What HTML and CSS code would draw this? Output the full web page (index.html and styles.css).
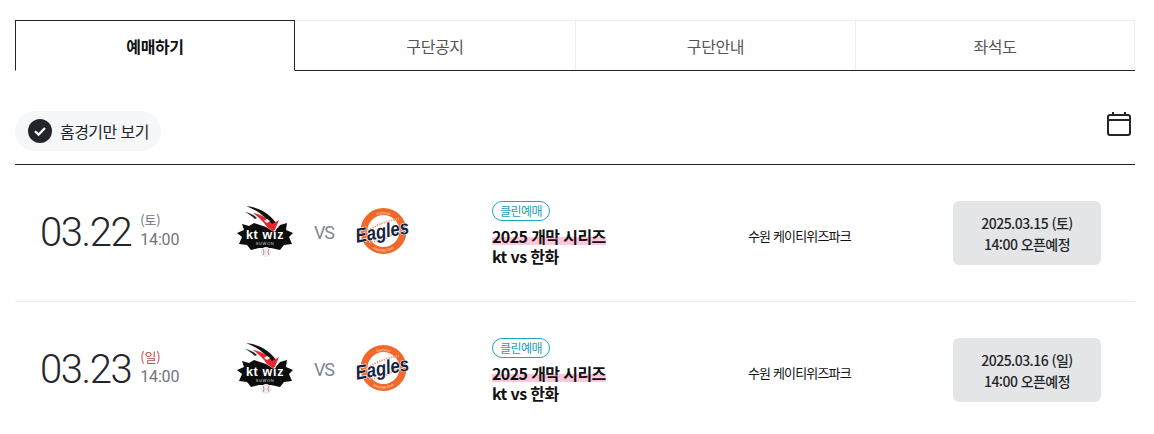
FILE: index.html
```html
<!DOCTYPE html>
<html lang="ko">
<head>
    <meta charset="utf-8">
    <meta name="viewport" content="width=device-width, initial-scale=1.0">
    <title>예매하기</title>
    <link rel="stylesheet" href="styles.css">
</head>
<body>
    <div class="container">
        <nav class="tabs">
            <a class="tab active" href="#">예매하기</a>
            <a class="tab" href="#">구단공지</a>
            <a class="tab" href="#">구단안내</a>
            <a class="tab" href="#">좌석도</a>
        </nav>

        <div class="filter-bar">
            <button class="home-filter">
                <svg class="check" viewBox="0 0 24 24" width="24" height="24">
                    <circle cx="12" cy="12" r="12" fill="#24252b"/>
                    <path d="M7 12.2L10.6 15.6L17 9" fill="none" stroke="#fff" stroke-width="2.2"/>
                </svg>
                홈경기만 보기
            </button>
            <svg class="calendar" viewBox="0 0 24 24" width="24" height="24">
                <rect x="1" y="3" width="22" height="20" rx="2" fill="none" stroke="#24252b" stroke-width="2"/>
                <path d="M1 8H23M6 0V3M18 0V3" fill="none" stroke="#24252b" stroke-width="2"/>
            </svg>
        </div>

        <ul class="games">
            <li class="game">
                <div class="when">
                    <span class="date">03.22</span>
                    <span class="day-time"><span class="day">(토)</span><span class="time">14:00</span></span>
                </div>
                <div class="match">
                    <svg class="logo-kt" viewBox="0 0 56 52">
                        <path d="M9 1C22 2 33 9 40 19L35 21C29 12 20 5 9 1Z" fill="#111"/>
                        <path d="M8 7C13 8 17 10 20 13L18 14C15 11 12 9 8 7Z" fill="#222"/>
                        <path d="M16 8C24 9 31 13 35 19L42 15L37 27L30 22C26 16 21 12 16 8Z" fill="#e8262d"/>
                        <path d="M30 14L33 16L30 18L27 16Z" fill="#fff"/>
                        <path d="M5 19L12 21L17 18L29 22L37 27L43 20L50 18L49 25L56 28L52 32L55 39L47 40L43 45L34 43H22L14 45L10 40L2 39L5 32L0 28L7 25Z" fill="#0d0d0d"/>
                        <text class="kt-text" x="28" y="34" text-anchor="middle">kt wiz</text>
                        <text class="kt-sub" x="28" y="40" text-anchor="middle">SUWON</text>
                        <circle cx="29" cy="47" r="5" fill="#eceaea"/>
                        <path d="M26 44Q28 47 26 50M32 44Q30 47 32 50" fill="none" stroke="#d98a8a" stroke-width="1"/>
                    </svg>
                    <span class="vs">VS</span>
                    <svg class="logo-eagles" viewBox="0 0 54 46">
                        <circle cx="27.5" cy="23" r="19.5" fill="#fff" stroke="#f0692a" stroke-width="7"/>
                        <path d="M10 24Q26 13 43 11M13 34Q30 33 45 21" fill="none" stroke="#f3a57e" stroke-width="2" stroke-dasharray="1.5 1"/>
                        <path id="ringTop1" d="M10.5 23A17 17 0 0 1 44.5 23" fill="none"/>
                        <path id="ringBottom1" d="M7 23A20.500 20.500 0 0 0 48 23" fill="none"/>
                        <text class="ring-text"><textPath href="#ringTop1" startOffset="50%" text-anchor="middle">Daejeon</textPath></text>
                        <text class="ring-text"><textPath href="#ringBottom1" startOffset="50%" text-anchor="middle">Baseball Club</textPath></text>
                        <text class="eagles-text" x="26.5" y="30" text-anchor="middle" textLength="54" lengthAdjust="spacingAndGlyphs" transform="rotate(-10 27 25)">Eagles</text>
                    </svg>
                </div>
                <div class="info">
                    <span class="badge">클린예매</span>
                    <strong class="title"><span class="mark">2025 개막 시리즈</span><br>kt vs 한화</strong>
                </div>
                <div class="venue">수원 케이티위즈파크</div>
                <div class="open">2025.03.15 (토)<br>14:00 오픈예정</div>
            </li>
            <li class="game">
                <div class="when">
                    <span class="date">03.23</span>
                    <span class="day-time"><span class="day sun">(일)</span><span class="time">14:00</span></span>
                </div>
                <div class="match">
                    <svg class="logo-kt" viewBox="0 0 56 52">
                        <path d="M9 1C22 2 33 9 40 19L35 21C29 12 20 5 9 1Z" fill="#111"/>
                        <path d="M8 7C13 8 17 10 20 13L18 14C15 11 12 9 8 7Z" fill="#222"/>
                        <path d="M16 8C24 9 31 13 35 19L42 15L37 27L30 22C26 16 21 12 16 8Z" fill="#e8262d"/>
                        <path d="M30 14L33 16L30 18L27 16Z" fill="#fff"/>
                        <path d="M5 19L12 21L17 18L29 22L37 27L43 20L50 18L49 25L56 28L52 32L55 39L47 40L43 45L34 43H22L14 45L10 40L2 39L5 32L0 28L7 25Z" fill="#0d0d0d"/>
                        <text class="kt-text" x="28" y="34" text-anchor="middle">kt wiz</text>
                        <text class="kt-sub" x="28" y="40" text-anchor="middle">SUWON</text>
                        <circle cx="29" cy="47" r="5" fill="#eceaea"/>
                        <path d="M26 44Q28 47 26 50M32 44Q30 47 32 50" fill="none" stroke="#d98a8a" stroke-width="1"/>
                    </svg>
                    <span class="vs">VS</span>
                    <svg class="logo-eagles" viewBox="0 0 54 46">
                        <circle cx="27.5" cy="23" r="19.5" fill="#fff" stroke="#f0692a" stroke-width="7"/>
                        <path d="M10 24Q26 13 43 11M13 34Q30 33 45 21" fill="none" stroke="#f3a57e" stroke-width="2" stroke-dasharray="1.5 1"/>
                        <path id="ringTop2" d="M10.5 23A17 17 0 0 1 44.5 23" fill="none"/>
                        <path id="ringBottom2" d="M7 23A20.500 20.500 0 0 0 48 23" fill="none"/>
                        <text class="ring-text"><textPath href="#ringTop2" startOffset="50%" text-anchor="middle">Daejeon</textPath></text>
                        <text class="ring-text"><textPath href="#ringBottom2" startOffset="50%" text-anchor="middle">Baseball Club</textPath></text>
                        <text class="eagles-text" x="26.5" y="30" text-anchor="middle" textLength="54" lengthAdjust="spacingAndGlyphs" transform="rotate(-10 27 25)">Eagles</text>
                    </svg>
                </div>
                <div class="info">
                    <span class="badge">클린예매</span>
                    <strong class="title"><span class="mark">2025 개막 시리즈</span><br>kt vs 한화</strong>
                </div>
                <div class="venue">수원 케이티위즈파크</div>
                <div class="open">2025.03.16 (일)<br>14:00 오픈예정</div>
            </li>
        </ul>
    </div>
</body>
</html>
```

FILE: styles.css
```css
* {
    box-sizing: border-box;
}
html, body {
    overflow: hidden;
}
body {
    margin: 0;
    background: #fff;
    color: #24252b;
    font-family: "Noto Sans CJK KR", "Noto Sans", sans-serif;
}
.container {
    width: 1120px;
    margin-left: 15px;
    padding-top: 20px;
}
.tabs {
    display: flex;
    height: 51px;
    border-bottom: 1px solid #24252b;
}
.tab {
    flex: 0 0 280px;
    display: flex;
    align-items: center;
    justify-content: center;
    height: 50px;
    border-top: 1px solid #eeeef2;
    border-left: 1px solid #eeeef2;
    color: #555;
    font-size: 16px;
    letter-spacing: -.4px;
    text-decoration: none;
}
.tab:last-child {
    border-right: 1px solid #eeeef2;
}
.tab.active {
    height: 51px;
    border: 1px solid #24252b;
    border-bottom: 1px solid #fff;
    color: #111;
    font-weight: 700;
}
.tab.active + .tab {
    border-left: none;
}
.filter-bar {
    display: flex;
    align-items: flex-start;
    justify-content: space-between;
    height: 94px;
    padding-top: 40px;
    border-bottom: 1px solid #24252b;
}
.home-filter {
    display: flex;
    align-items: center;
    gap: 8px;
    height: 40px;
    padding: 0 12px 0 13px;
    border: none;
    border-radius: 20px;
    background: #f6f7f9;
    color: #24252b;
    font-family: inherit;
    font-size: 16px;
    letter-spacing: -.55px;
}
.calendar {
    margin: 1px 4px 0 0;
}
.games {
    margin: 0;
    padding: 0;
    list-style: none;
}
.game {
    display: flex;
    align-items: center;
    height: 137px;
    border-bottom: 1px solid #eeeef0;
}
.when {
    display: flex;
    align-items: center;
    width: 211px;
    padding-left: 25px;
    gap: 9px;
    font-family: Roboto, sans-serif;
}
.date {
    font-size: 40px;
    font-weight: 300;
    letter-spacing: -1.4px;
    line-height: 48px;
}
.day-time {
    display: flex;
    flex-direction: column;
    margin-top: -6px;
    color: #71757d;
    font-size: 16px;
    line-height: 20px;
    letter-spacing: -.2px;
}
.day {
    font-size: 13px;
    font-family: "Noto Sans CJK KR", sans-serif;
}
.sun {
    color: #c0504d;
}
.match {
    display: flex;
    align-items: center;
    width: 266px;
    margin-top: -4px;
}
.logo-kt {
    width: 56px;
    height: 52px;
    margin-left: 11px;
    overflow: visible;
}
.logo-eagles {
    width: 54px;
    height: 46px;
    margin-left: 22px;
    overflow: visible;
}
.vs {
    margin: 2px 0 0 21px;
    color: #7d8794;
    font-family: Roboto, sans-serif;
    font-size: 18px;
    letter-spacing: -1.2px;
}
.kt-text {
    fill: #fff;
    font-family: "Liberation Sans", sans-serif;
    font-size: 12.500px;
    font-weight: 700;
    letter-spacing: .7px;
}
.kt-sub {
    fill: #ddd;
    font-family: "Liberation Sans", sans-serif;
    font-size: 4px;
    letter-spacing: .6px;
}
.ring-text {
    fill: #ffe3d3;
    font-family: "Liberation Sans", sans-serif;
    font-size: 3.500px;
}
.eagles-text {
    fill: #14233f;
    stroke: #fff;
    stroke-width: 1.200px;
    paint-order: stroke;
    font-family: "Liberation Sans", sans-serif;
    font-size: 20px;
    font-style: italic;
    font-weight: 700;
}
.info {
    display: flex;
    flex-direction: column;
    align-items: flex-start;
    width: 256px;
}
.badge {
    height: 20px;
    margin-bottom: 5px;
    padding: 0 7px;
    border: 1px solid #1ca6c0;
    border-radius: 10px;
    color: #1b9db6;
    font-size: 12px;
    letter-spacing: -.5px;
    line-height: 17px;
}
.title {
    color: #111;
    font-size: 16px;
    letter-spacing: -.6px;
    line-height: 20px;
}
.mark {
    display: inline-block;
    background: linear-gradient(transparent 55%, #ffc6dc 55%, #ffc6dc 95%, transparent 95%);
}
.venue {
    width: 205px;
    padding-top: 4px;
    color: #111;
    font-size: 13px;
    letter-spacing: -.85px;
}
.open {
    width: 148px;
    height: 64px;
    padding-top: 12px;
    border-radius: 6px;
    background: #e4e5e7;
    color: #24252b;
    font-size: 14px;
    font-weight: 500;
    letter-spacing: -.55px;
    line-height: 21px;
    text-align: center;
}
```
